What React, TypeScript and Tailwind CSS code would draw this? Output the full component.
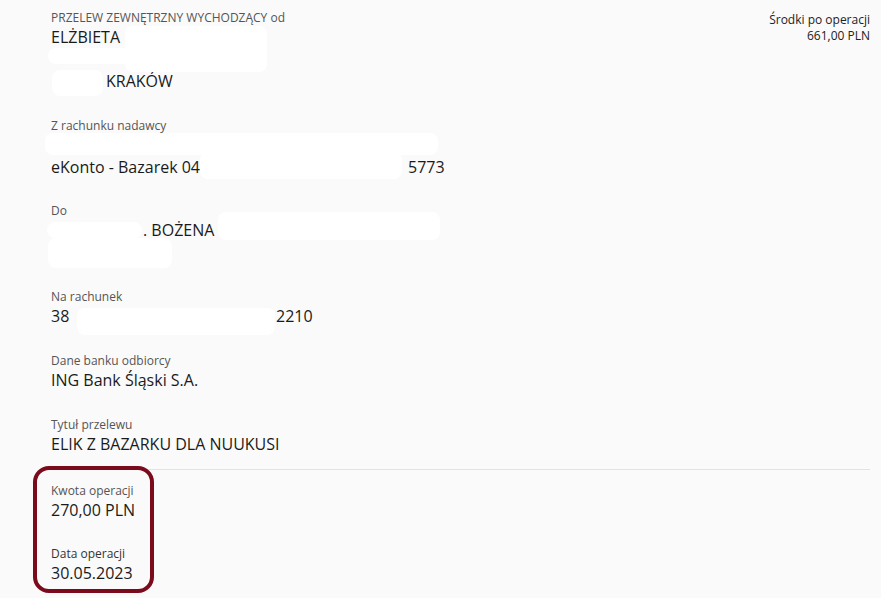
import React from "react";

const Label = ({ children, className = "" }: { children: React.ReactNode; className?: string }) => (
  <div className={`text-[12px] leading-[16px] text-[#555555] ${className}`}>{children}</div>
);

const Value = ({ children }: { children: React.ReactNode }) => (
  <div className="text-[16px] leading-[22px] text-[#1a1a1a] whitespace-nowrap">{children}</div>
);

const Blob = ({ c }: { c: string }) => <div className={`absolute bg-white rounded-[8px] ${c}`} />;

export default function App() {
  return (
    <div
      className="relative w-full h-[598px] overflow-hidden bg-[#fafafa]"
      style={{ fontFamily: '"Open Sans", "Noto Sans", sans-serif' }}
    >
      <div className="flex justify-between">
        <div className="pl-[51px] pt-[10px] flex flex-col">
          <div>
            <Label>PRZELEW ZEWNĘTRZNY WYCHODZĄCY od</Label>
            <Value>ELŻBIETA</Value>
            <Value>&nbsp;</Value>
            <Value>
              <span className="inline-block w-[55px]" />
              KRAKÓW
            </Value>
          </div>
          <div className="mt-[26px]">
            <Label>Z rachunku nadawcy</Label>
            <Value>&nbsp;</Value>
            <Value>
              <span className="inline-block w-[357px]">eKonto - Bazarek 04</span>5773
            </Value>
          </div>
          <div className="mt-[25px]">
            <Label>Do</Label>
            <Value>
              <span className="inline-block w-[92px]" />. BOŻENA
            </Value>
            <Value>&nbsp;</Value>
          </div>
          <div className="mt-[26px]">
            <Label>Na rachunek</Label>
            <Value>
              <span className="inline-block w-[225px]">38</span>2210
            </Value>
          </div>
          <div className="mt-[26px]">
            <Label>Dane banku odbiorcy</Label>
            <Value>ING Bank Śląski S.A.</Value>
          </div>
          <div className="mt-[26px]">
            <Label>Tytuł przelewu</Label>
            <Value>ELIK Z BAZARKU DLA NUUKUSI</Value>
          </div>
        </div>
        <div className="pr-[11px] pt-[12px] text-right text-[12px] leading-[16px] text-[#222222]">
          <div>Środki po operacji</div>
          <div>661,00 PLN</div>
        </div>
      </div>

      <div className="mt-[14px] ml-[40px] mr-[11px] h-px bg-[#e3e3e3]" />

      <div className="pl-[51px] pt-[13px]">
        <div>
          <Label>Kwota operacji</Label>
          <Value>270,00 PLN</Value>
        </div>
        <div className="mt-[25px]">
          <Label className="!text-[#333333]">Data operacji</Label>
          <Value>30.05.2023</Value>
        </div>
      </div>

      {/* redactions */}
      <Blob c="left-[125px] top-[26px] w-[142px] h-[46px]" />
      <Blob c="left-[48px] top-[48px] w-[219px] h-[16px]" />
      <Blob c="left-[52px] top-[70px] w-[51px] h-[26px]" />
      <Blob c="left-[45px] top-[133px] w-[393px] h-[22px]" />
      <Blob c="left-[200px] top-[152px] w-[202px] h-[27px]" />
      <Blob c="left-[47px] top-[222px] w-[95px] h-[16px]" />
      <Blob c="left-[218px] top-[212px] w-[222px] h-[28px]" />
      <Blob c="left-[48px] top-[238px] w-[124px] h-[30px]" />
      <Blob c="left-[77px] top-[308px] w-[198px] h-[27px]" />

      {/* annotation frame */}
      <div className="absolute left-[33px] top-[466px] w-[121px] h-[127px] border-4 border-[#7b0a1c] rounded-[16px]" />
    </div>
  );
}
